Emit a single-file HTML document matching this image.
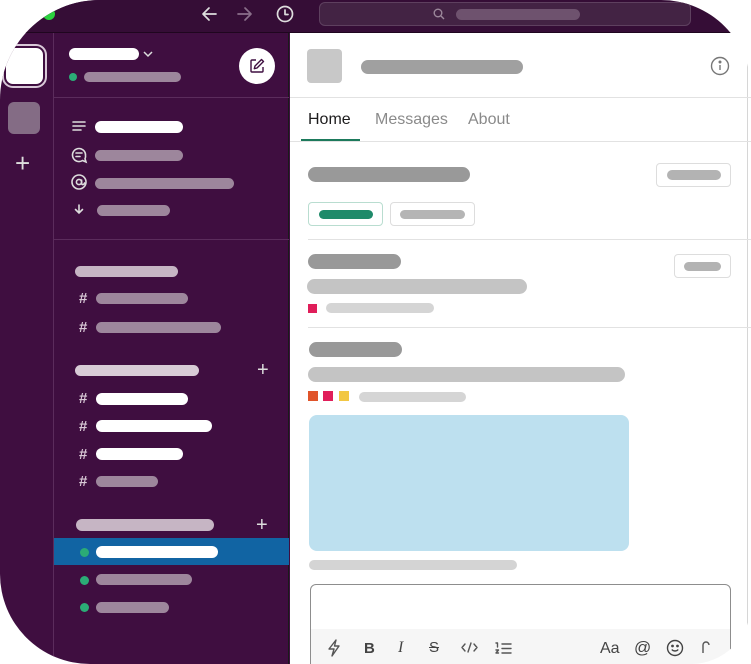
<!DOCTYPE html>
<html><head><meta charset="utf-8"><style>
*{margin:0;padding:0;box-sizing:border-box}
body{width:751px;height:664px;background:#fff;overflow:hidden;font-family:"Liberation Sans",sans-serif}
#w{position:absolute;left:0;top:0;width:751px;height:664px;border-radius:100px 90px 60px 90px;overflow:hidden;background:transparent}
.a{position:absolute}
.b{position:absolute;border-radius:8px}
.hash{position:absolute;color:#d8c8d6;font-size:15px;font-weight:bold;left:79px}
</style></head><body><div id="w">
<div class="a" style="left:0;top:0;width:290px;height:664px;background:#3f0e40"></div>
<!-- top bar -->
<div class="a" style="left:0;top:0;width:751px;height:33px;background:#350d36;border-bottom:1px solid #1f061f"></div>
<div class="a" style="left:43px;top:8px;width:12px;height:12px;border-radius:50%;background:#2bd13f"></div>
<svg class="a" style="left:200px;top:5px" width="100" height="20" viewBox="0 0 100 20" fill="none" stroke-linecap="round" stroke-linejoin="round">
<path d="M16 9H3M9 3L3 9l6 6" stroke="#ddd" stroke-width="1.7"/>
<path d="M38 9h13M45 3l6 6-6 6" stroke="#8a6f8a" stroke-width="1.7"/>
<circle cx="85" cy="9" r="7.5" stroke="#ddd" stroke-width="1.7"/><path d="M85 5v4.5h3" stroke="#ddd" stroke-width="1.7"/>
</svg>
<div class="a" style="left:319px;top:2px;width:372px;height:24px;border-radius:6px;background:#432344;border:1px solid #5e405f"></div>
<svg class="a" style="left:433px;top:8px" width="12" height="12" viewBox="0 0 12 12" fill="none" stroke="#9c889b" stroke-width="1.4"><circle cx="5" cy="5" r="3.8"/><path d="M8 8l3 3"/></svg>
<div class="b" style="left:456px;top:9px;width:124px;height:11px;background:#6e526e"></div>
<!-- rail -->
<div class="a" style="left:4px;top:46px;width:41px;height:40px;border-radius:9px;background:#fff;border:2px solid #3f0e40;box-shadow:0 0 0 2px #d9c9d8"></div>
<div class="a" style="left:8px;top:102px;width:32px;height:32px;border-radius:6px;background:#846c85"></div>
<div class="a" style="left:15px;top:149px;color:#ddd;font-size:26px;line-height:28px">+</div>
<!-- sidebar -->
<div class="a" style="left:53px;top:33px;width:236px;height:631px;border-left:1px solid #5b2c5c;border-right:1px solid #1a1a1a"></div>
<div class="b" style="left:69px;top:48px;width:70px;height:12px;background:#fff;border-radius:7px"></div>
<svg class="a" style="left:143px;top:50px" width="10" height="8"><path d="M1 2l4 4 4-4" stroke="#ddd" stroke-width="1.5" fill="none"/></svg>
<div class="a" style="left:69px;top:73px;width:8px;height:8px;border-radius:50%;background:#2bac76"></div>
<div class="b" style="left:84px;top:72px;width:97px;height:10px;background:#9d869c"></div>
<div class="a" style="left:239px;top:48px;width:36px;height:36px;border-radius:50%;background:#fff"></div>
<svg class="a" style="left:249px;top:58px" width="16" height="16" viewBox="0 0 16 16" fill="none" stroke="#3f0e40" stroke-width="1.4" stroke-linejoin="round"><path d="M7 2H3a1 1 0 0 0-1 1v10a1 1 0 0 0 1 1h10a1 1 0 0 0 1-1V9"/><path d="M12.5 1.5l2 2L8 10l-2.7.7L6 8z"/></svg>
<div class="a" style="left:54px;top:97px;width:235px;height:1px;background:#5b2c5c"></div>
<svg class="a" style="left:70px;top:118px" width="20" height="100" viewBox="0 0 20 100" fill="none" stroke="#ddd" stroke-width="1.6" stroke-linecap="round">
<path d="M3 4h12M3 8h12M3 12h8"/>
<path d="M15.5 37a6.5 6.5 0 1 0-3 5.5l3.5 1.5-1-3.2a6.4 6.4 0 0 0 .5-3.8z"/><path d="M6 35h6M6 38.5h4"/>
<circle cx="9" cy="64" r="7"/><circle cx="9" cy="64" r="2.6"/><path d="M11.6 62v3.5c0 1.5 2.4 1.5 3-.5"/>
<path d="M9 87v8M5.5 91.5L9 95l3.5-3.5"/>
</svg>
<div class="b" style="left:95px;top:121px;width:88px;height:12px;background:#fff"></div>
<div class="b" style="left:95px;top:150px;width:88px;height:11px;background:#9d869c"></div>
<div class="b" style="left:95px;top:178px;width:139px;height:11px;background:#9d869c"></div>
<div class="b" style="left:97px;top:205px;width:73px;height:11px;background:#9d869c"></div>
<div class="a" style="left:54px;top:239px;width:235px;height:1px;background:#5b2c5c"></div>
<div class="b" style="left:75px;top:266px;width:103px;height:11px;background:#c6b5c4"></div>
<div class="hash" style="top:290px">#</div><div class="b" style="left:96px;top:293px;width:92px;height:11px;background:#9d869c"></div>
<div class="hash" style="top:319px">#</div><div class="b" style="left:96px;top:322px;width:125px;height:11px;background:#9d869c"></div>
<div class="b" style="left:75px;top:365px;width:124px;height:11px;background:#d8cbd6"></div>
<div class="a" style="left:257px;top:359px;color:#ddd;font-size:20px">+</div>
<div class="hash" style="top:390px">#</div><div class="b" style="left:96px;top:393px;width:92px;height:12px;background:#fff"></div>
<div class="hash" style="top:418px">#</div><div class="b" style="left:96px;top:420px;width:116px;height:12px;background:#fff"></div>
<div class="hash" style="top:446px">#</div><div class="b" style="left:96px;top:448px;width:87px;height:12px;background:#fff"></div>
<div class="hash" style="top:473px">#</div><div class="b" style="left:96px;top:476px;width:62px;height:11px;background:#9d869c"></div>
<div class="b" style="left:76px;top:519px;width:138px;height:12px;background:#c6b5c4"></div>
<div class="a" style="left:256px;top:514px;color:#ddd;font-size:20px">+</div>
<div class="a" style="left:54px;top:538px;width:235px;height:27px;background:#1164a3"></div>
<div class="a" style="left:80px;top:548px;width:9px;height:9px;border-radius:50%;background:#2bac76"></div>
<div class="b" style="left:96px;top:546px;width:122px;height:12px;background:#fff"></div>
<div class="a" style="left:80px;top:576px;width:9px;height:9px;border-radius:50%;background:#2bac76"></div>
<div class="b" style="left:96px;top:574px;width:96px;height:11px;background:#9d869c"></div>
<div class="a" style="left:80px;top:603px;width:9px;height:9px;border-radius:50%;background:#2bac76"></div>
<div class="b" style="left:96px;top:602px;width:73px;height:11px;background:#9d869c"></div>
<!-- main -->
<div class="a" style="left:290px;top:34px;width:461px;height:630px;background:#fff"></div>
<div class="a" style="left:747px;top:34px;width:1px;height:630px;background:#d6d6d6"></div>
<div class="a" style="left:307px;top:49px;width:35px;height:34px;border-radius:4px;background:#c8c8c8"></div>
<div class="b" style="left:361px;top:60px;width:162px;height:14px;background:#a0a0a0"></div>
<svg class="a" style="left:710px;top:56px" width="20" height="20" viewBox="0 0 20 20" fill="none" stroke="#777" stroke-width="1.4"><circle cx="10" cy="10" r="8.5"/><path d="M10 9v5"/><circle cx="10" cy="6" r=".8" fill="#777"/></svg>
<div class="a" style="left:290px;top:97px;width:461px;height:1px;background:#e2e2e2"></div>
<div class="a" style="left:308px;top:111px;font-size:16px;color:#1d1c1d">Home</div>
<div class="a" style="left:375px;top:111px;font-size:16px;color:#8a8a8a">Messages</div>
<div class="a" style="left:468px;top:111px;font-size:16px;color:#8a8a8a">About</div>
<div class="a" style="left:301px;top:139px;width:59px;height:2px;background:#1d7a5c"></div>
<div class="a" style="left:290px;top:141px;width:461px;height:1px;background:#e2e2e2"></div>
<div class="b" style="left:308px;top:167px;width:162px;height:15px;background:#999"></div>
<div class="a" style="left:656px;top:163px;width:75px;height:24px;border:1px solid #ddd;border-radius:4px"></div>
<div class="b" style="left:667px;top:170px;width:54px;height:10px;background:#b3b3b3"></div>
<div class="a" style="left:308px;top:202px;width:75px;height:24px;border:1px solid #b9ddd0;border-radius:4px"></div>
<div class="b" style="left:319px;top:210px;width:54px;height:9px;background:#1f8a6a"></div>
<div class="a" style="left:390px;top:202px;width:85px;height:24px;border:1px solid #ddd;border-radius:4px"></div>
<div class="b" style="left:400px;top:210px;width:65px;height:9px;background:#b5b5b5"></div>
<div class="a" style="left:308px;top:239px;width:443px;height:1px;background:#e2e2e2"></div>
<div class="b" style="left:308px;top:254px;width:93px;height:15px;background:#999"></div>
<div class="a" style="left:674px;top:254px;width:57px;height:24px;border:1px solid #ddd;border-radius:4px"></div>
<div class="b" style="left:684px;top:262px;width:37px;height:9px;background:#b3b3b3"></div>
<div class="b" style="left:307px;top:279px;width:220px;height:15px;background:#c4c4c4"></div>
<div class="a" style="left:308px;top:304px;width:9px;height:9px;background:#e01e5a"></div>
<div class="b" style="left:326px;top:303px;width:108px;height:10px;background:#d5d5d5"></div>
<div class="a" style="left:308px;top:327px;width:443px;height:1px;background:#e2e2e2"></div>
<div class="b" style="left:309px;top:342px;width:93px;height:15px;background:#999"></div>
<div class="b" style="left:308px;top:367px;width:317px;height:15px;background:#c4c4c4"></div>
<div class="a" style="left:308px;top:391px;width:10px;height:10px;background:#e0542a"></div>
<div class="a" style="left:323px;top:391px;width:10px;height:10px;background:#e01e5a"></div>
<div class="a" style="left:339px;top:391px;width:10px;height:10px;background:#f2c744"></div>
<div class="b" style="left:359px;top:392px;width:107px;height:10px;background:#d5d5d5"></div>
<div class="a" style="left:309px;top:415px;width:320px;height:136px;border-radius:8px;background:#bde0ef"></div>
<div class="b" style="left:309px;top:560px;width:208px;height:10px;background:#d4d4d4"></div>
<div class="a" style="left:310px;top:584px;width:421px;height:90px;border:1px solid #8d8d8d;border-radius:6px;overflow:hidden">
<div class="a" style="left:0;top:44px;width:421px;height:50px;background:#f6f6f6"></div></div>
<svg class="a" style="left:325px;top:638px" width="200" height="20" viewBox="0 0 200 20" fill="none" stroke="#555" stroke-width="1.4" stroke-linecap="round" stroke-linejoin="round">
<path d="M11 2L4 11h5l-2 7 7-10H9.5z"/>
<path d="M140 6l-3 3.5 3 3.5M149 6l3 3.5-3 3.5M146 5l-3 9"/>
<path d="M171 5h1.5v4M171 12h2.5l-2.5 3h2.5M177 6h9M177 10.5h9M177 15h9"/>
</svg>
<div class="a" style="left:364px;top:640px;font-size:15px;font-weight:bold;color:#444">B</div>
<div class="a" style="left:398px;top:639px;font-size:16px;font-style:italic;font-family:'Liberation Serif',serif;color:#444">I</div>
<div class="a" style="left:429px;top:639px;font-size:15px;color:#444;text-decoration:line-through">S</div>
<div class="a" style="left:600px;top:640px;font-size:16px;color:#444">Aa</div>
<div class="a" style="left:634px;top:638px;font-size:17px;color:#444">@</div>
<svg class="a" style="left:666px;top:639px" width="18" height="18" viewBox="0 0 18 18" fill="none" stroke="#444" stroke-width="1.4"><circle cx="9" cy="9" r="7.5"/><path d="M5.8 10.5c1.5 2 4.9 2 6.4 0"/><circle cx="6.5" cy="7" r=".7" fill="#444"/><circle cx="11.5" cy="7" r=".7" fill="#444"/></svg>
<svg class="a" style="left:700px;top:639px" width="12" height="18" viewBox="0 0 12 18" fill="none" stroke="#555" stroke-width="1.4"><path d="M3 14V6a3 3 0 0 1 6 0"/></svg>
</div></body></html>
